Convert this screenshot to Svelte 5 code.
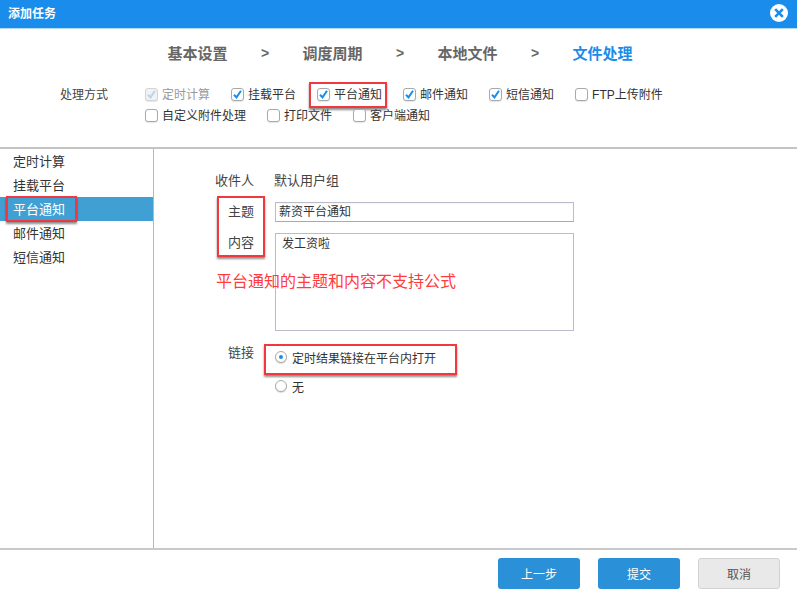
<script>
  const steps = ['基本设置', '调度周期', '本地文件', '文件处理'];
  const methods = [
    { label: '定时计算', checked: true, disabled: true },
    { label: '挂载平台', checked: true },
    { label: '平台通知', checked: true, marked: true },
    { label: '邮件通知', checked: true },
    { label: '短信通知', checked: true },
    { label: 'FTP上传附件' },
    { label: '自定义附件处理' },
    { label: '打印文件' },
    { label: '客户端通知' }
  ];
  const sideItems = ['定时计算', '挂载平台', '平台通知', '邮件通知', '短信通知'];
</script>

<div class="dialog">
  <header class="titlebar">
    <span class="title">添加任务</span>
    <svg class="close" width="18" height="18" viewBox="0 0 18 18" aria-hidden="true">
      <circle cx="9" cy="9" r="9" fill="#fff" />
      <path d="M5.2 5.2 12.8 12.8M12.8 5.2 5.2 12.8" stroke="#1a8ceb" stroke-width="2.6" fill="none" />
    </svg>
  </header>

  <nav class="steps">
    {#each steps as step, i}
      {#if i > 0}<span class="sep">&gt;</span>{/if}
      <span class="step" class:current={i === 3}>{step}</span>
    {/each}
  </nav>

  <section class="methods">
    <span class="methods-label">处理方式</span>
    <div class="method-list">
      {#each methods as m}
        <span class="method" class:disabled={m.disabled}>
          <span class="box">
            {#if m.checked}
              <svg width="13" height="13" viewBox="0 0 13 13" aria-hidden="true">
                <path d="M3 6.8 5.5 9.4 10 2.8" fill="none" stroke-width="2" />
              </svg>
            {/if}
          </span>
          <span class="method-text">{m.label}</span>
          {#if m.marked}<i class="mark mark-method"></i>{/if}
        </span>
      {/each}
    </div>
  </section>

  <div class="body">
    <aside class="side">
      {#each sideItems as item, i}
        <div class="side-item" class:active={i === 2}>
          {item}
          {#if i === 2}<i class="mark mark-side"></i>{/if}
        </div>
      {/each}
    </aside>

    <main class="form">
      <div class="row row-recipient">
        <span class="label">收件人</span>
        <span class="value">默认用户组</span>
      </div>
      <div class="labelled">
        <i class="mark mark-labels"></i>
        <div class="row row-subject">
          <span class="label">主题</span>
          <div class="input">薪资平台通知</div>
        </div>
        <div class="row row-content">
          <span class="label">内容</span>
          <div class="textarea">
            发工资啦
            <span class="note">平台通知的主题和内容不支持公式</span>
          </div>
        </div>
      </div>
      <div class="row row-link">
        <span class="label">链接</span>
        <div class="radios">
          <div class="radio-line first">
            <span class="radio on"></span>
            <span>定时结果链接在平台内打开</span>
            <i class="mark mark-radio"></i>
          </div>
          <div class="radio-line">
            <span class="radio"></span>
            <span>无</span>
          </div>
        </div>
      </div>
    </main>
  </div>

  <footer class="footer">
    <button class="btn primary">上一步</button>
    <button class="btn primary">提交</button>
    <button class="btn plain">取消</button>
  </footer>
</div>

<style>
  :global(body) {
    margin: 0;
    background: #fff;
  }
  .dialog {
    width: 797px;
    height: 597px;
    display: flex;
    flex-direction: column;
    overflow: hidden;
    font-family: "Liberation Sans", "Noto Sans CJK SC", sans-serif;
    font-size: 12px;
    color: #444;
    background: #fff;
  }
  .titlebar {
    height: 28px;
    flex: none;
    display: flex;
    align-items: center;
    justify-content: space-between;
    padding: 0 9px 0 8px;
    background: #1a8ceb;
    border-bottom: 1px solid #b5dcf7;
  }
  .title {
    color: #fff;
    font-weight: 700;
    font-size: 12px;
    line-height: 16px;
  }
  .close {
    display: block;
    margin-top: -2px;
  }
  .steps {
    flex: none;
    height: 50px;
    display: flex;
    align-items: center;
    justify-content: center;
    gap: 33px;
    padding-left: 3px;
    box-sizing: border-box;
    font-size: 15px;
    line-height: 20px;
    font-weight: 700;
    color: #666;
  }
  .sep {
    width: 9px;
    font-size: 14px;
    text-align: center;
    margin-top: -2px;
  }
  .current {
    color: #1a8ceb;
  }
  .methods {
    flex: none;
    height: 70px;
    box-sizing: border-box;
    padding: 6px 0 0 60px;
    display: flex;
    border-bottom: 2px solid #c4c4c4;
  }
  .methods-label {
    width: 83px;
    line-height: 21px;
    flex: none;
  }
  .method-list {
    width: 540px;
    display: flex;
    flex-wrap: wrap;
    align-content: flex-start;
    column-gap: 19px;
  }
  .method {
    position: relative;
    height: 21px;
    display: flex;
    align-items: center;
    gap: 4px;
    color: #333;
  }
  .method-text {
    line-height: 21px;
  }
  .method.disabled {
    color: #999;
  }
  .box {
    width: 11px;
    height: 11px;
    flex: none;
    margin: -2px 0 0 2px;
    border: 1px solid #a9a9a9;
    border-radius: 3px;
    background: #fff;
    box-shadow: 0 1px 1px rgba(0, 0, 0, 0.1);
    position: relative;
  }
  .box svg {
    position: absolute;
    left: -1px;
    top: -1px;
  }
  .box path {
    stroke: #1a8ceb;
  }
  .disabled .box {
    border-color: #d4d4d4;
    background: #f2f2f2;
  }
  .disabled .box path {
    stroke: #b4d6f0;
  }
  .mark {
    position: absolute;
    box-sizing: border-box;
    border: 2px solid #f0383e;
    box-shadow: 0 2px 2px rgba(0, 0, 0, 0.45);
    pointer-events: none;
  }
  .mark-method {
    left: -6px;
    top: -3px;
    width: 78px;
    height: 26px;
  }
  .body {
    flex: 1;
    display: flex;
    min-height: 0;
  }
  .side {
    width: 153px;
    flex: none;
    border-right: 1px solid #b8b8b8;
    font-size: 13px;
  }
  .side-item {
    position: relative;
    height: 24px;
    line-height: 25px;
    padding-left: 13px;
    color: #333;
  }
  .side-item.active {
    background: #409fd3;
    color: #fff;
  }
  .mark-side {
    left: 6px;
    top: -1px;
    width: 71px;
    height: 26px;
  }
  .form {
    flex: 1;
    font-size: 13px;
    color: #444;
  }
  .row {
    display: flex;
    align-items: flex-start;
  }
  .label {
    width: 100px;
    flex: none;
    margin-right: 21px;
    text-align: right;
  }
  .value {
    margin-left: -1px;
  }
  .row-recipient {
    margin-top: 22px;
    line-height: 19px;
  }
  .labelled {
    position: relative;
    margin-top: 12px;
  }
  .mark-labels {
    left: 63px;
    top: -6px;
    width: 48px;
    height: 61px;
  }
  .row-subject .label {
    line-height: 20px;
  }
  .input {
    height: 18px;
    line-height: 18px;
    padding-left: 3px;
    width: 294px;
    border: 1px solid #bbbbc9;
    border-bottom-color: #aaa;
    font-size: 12px;
    color: #333;
    box-shadow: inset 0 1px 1px rgba(0, 0, 0, 0.04);
  }
  .row-content {
    margin-top: 11px;
  }
  .row-content .label {
    line-height: 20px;
  }
  .textarea {
    position: relative;
    width: 291px;
    height: 91px;
    padding: 3px 0 2px 6px;
    border: 1px solid #bbbbc9;
    font-size: 12px;
    line-height: 14px;
    color: #333;
  }
  .note {
    position: absolute;
    left: -60px;
    top: 38px;
    font-size: 16px;
    line-height: 20px;
    white-space: nowrap;
    color: #ff3b40;
  }
  .row-link {
    margin-top: 13px;
  }
  .row-link .label {
    line-height: 18px;
  }
  .radios {
    font-size: 12px;
    color: #333;
  }
  .radio-line {
    position: relative;
    height: 20px;
    display: flex;
    align-items: center;
    gap: 5px;
    margin-top: 9px;
  }
  .radio-line.first {
    margin-top: 3px;
  }
  .radio {
    box-sizing: border-box;
    width: 12px;
    height: 12px;
    flex: none;
    border: 1px solid #a9a9a9;
    border-radius: 50%;
    background: #fff;
    box-shadow: 0 1px 1px rgba(0, 0, 0, 0.15);
    position: relative;
  }
  .radio.on::after {
    content: "";
    position: absolute;
    left: 3px;
    top: 3px;
    width: 4px;
    height: 4px;
    border-radius: 50%;
    background: #1a8ceb;
  }
  .mark-radio {
    left: -11px;
    top: -3px;
    width: 193px;
    height: 31px;
  }
  .footer {
    flex: none;
    height: 49px;
    box-sizing: border-box;
    border-top: 2px solid #c9c9c9;
    display: flex;
    gap: 18px;
    padding: 8px 17px 0 0;
    justify-content: flex-end;
    align-items: flex-start;
  }
  .btn {
    width: 82px;
    height: 31px;
    border-radius: 3px;
    border: 1px solid transparent;
    font: inherit;
    font-size: 12px;
    padding: 0;
  }
  .primary {
    background: #2a90d8;
    color: #fff;
  }
  .plain {
    background: #e9e9e9;
    border-color: #d2d2d2;
    color: #555;
  }
</style>
